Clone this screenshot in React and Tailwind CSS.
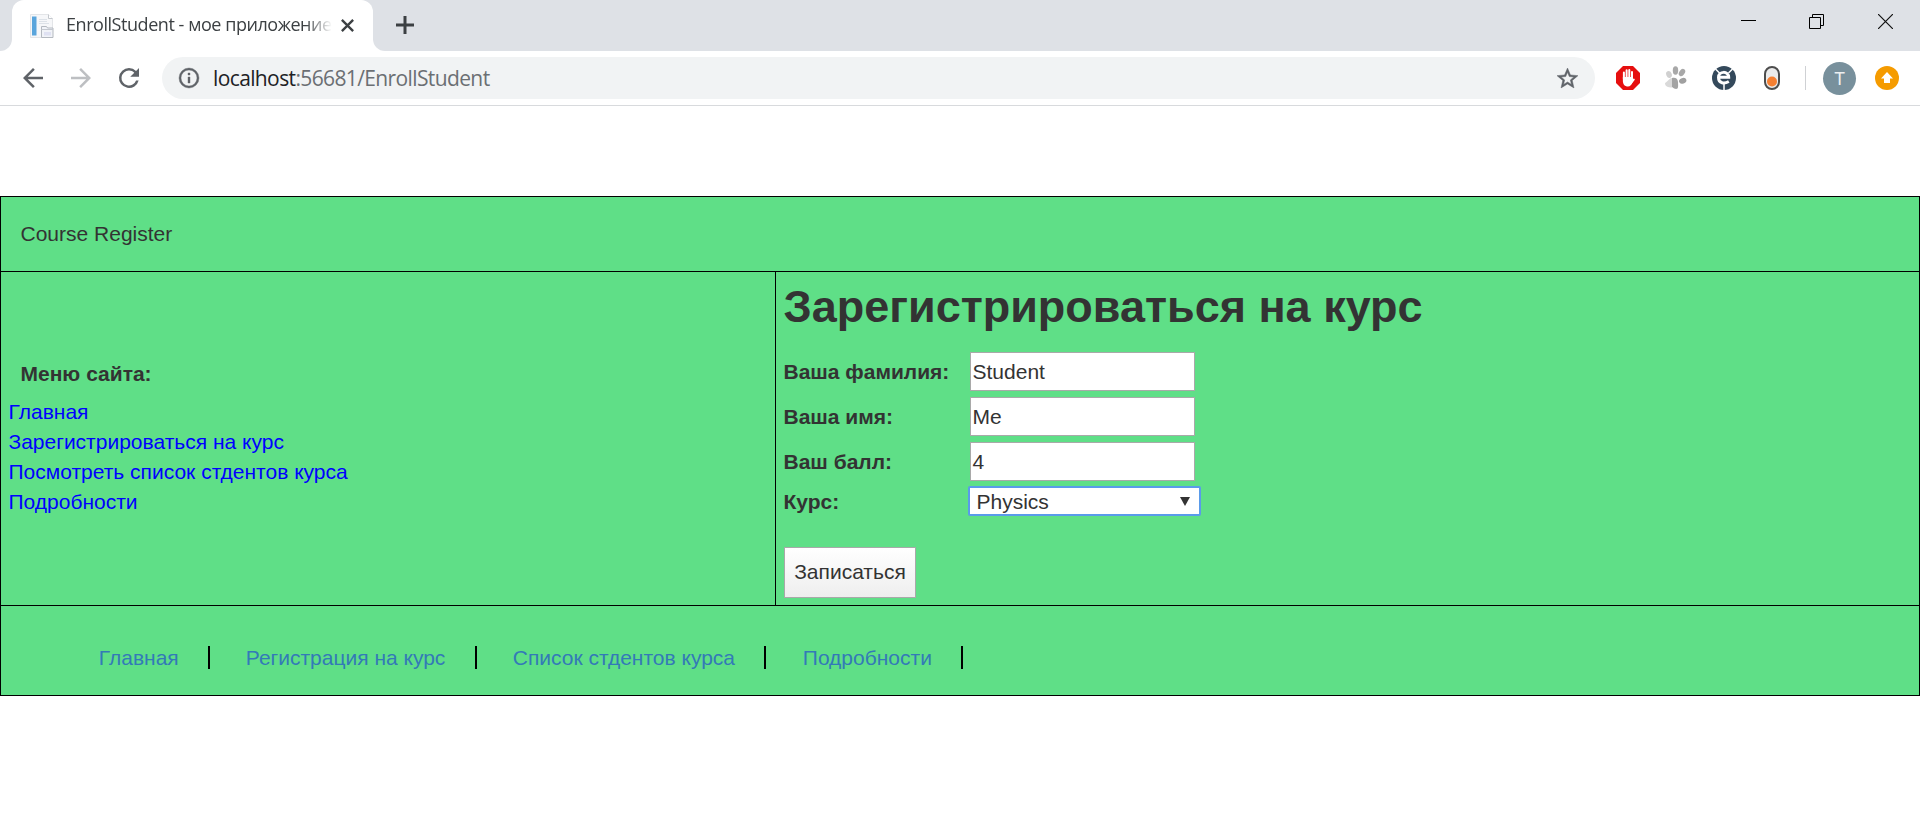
const ARIAL = "font-['Liberation_Sans',sans-serif]";

function Favicon() {
  return (
    <svg className="h-6 w-6 shrink-0" viewBox="0 0 24 24">
      <path d="M.5.5h18l4 4v19H.5z" fill="#f6f7f9" stroke="#e3e5e8" />
      <path d="M2 2.500h4.500v19H2z" fill="#5aa5dc" />
      <path d="M9 5h8v1H9zM9 7h8v1H9zM9 9h10v1H9z" fill="#dde2e8" />
      <path d="M18.500 .5v4h4" fill="#fff" stroke="#c4c8cd" />
      <path d="M11.500 12.500h5l1 1.500h5.500v9.500h-11.500z" fill="#f1f3f8" stroke="#b4b9c0" />
      <path d="M11.500 15.500h11.500" stroke="#c4c8cf" />
      <path d="M14 18h7v3.500h-7z" fill="#dfe1f2" />
    </svg>
  );
}

function TabStrip() {
  return (
    <div className="flex h-[51px] bg-[#dee1e6]">
      <div className="w-3 bg-white">
        <div className="h-full w-3 rounded-br-[12px] bg-[#dee1e6]" />
      </div>
      <div className="flex w-[361px] items-center rounded-t-[12px] bg-white pl-[18px]">
        <Favicon />
        <div className="mb-0.5 ml-3 w-[266px] whitespace-nowrap font-['Open_Sans',sans-serif] text-[18px] tracking-[-0.45px] text-[#3c4043] [mask-image:linear-gradient(to_right,black_90%,transparent_100%)]">
          EnrollStudent - мое приложение
        </div>
        <svg className="ml-[9px] h-[13px] w-[13px] shrink-0" viewBox="0 0 12 12" stroke="#3c4043" strokeWidth="2.200">
          <path d="M.8.8l10.400 10.400M11.200.8L.8 11.200" />
        </svg>
      </div>
      <div className="w-3 bg-white">
        <div className="h-full w-3 rounded-bl-[12px] bg-[#dee1e6]" />
      </div>
      <svg className="ml-[11px] mt-4 h-[18px] w-[18px]" viewBox="0 0 18 18" stroke="#3c4043" strokeWidth="3">
        <path d="M9 0v18M0 9h18" />
      </svg>
      <div className="ml-auto flex pt-[14px]">
        <svg className="h-[15px] w-[15px]" viewBox="0 0 15 15" shapeRendering="crispEdges">
          <path d="M0 6h15v1H0z" fill="#000" />
        </svg>
        <svg className="ml-[53px] h-[15px] w-[15px]" viewBox="0 0 15 15" fill="none" stroke="#000">
          <path d="M.5 3.500h11v11H.5zM3.500 3.500v-3h11v11h-3" />
        </svg>
        <svg className="ml-[54px] mr-[27px] h-[15px] w-[15px]" viewBox="0 0 15 15" stroke="#111" strokeWidth="1.200">
          <path d="M0 0l15 15M15 0L0 15" />
        </svg>
      </div>
    </div>
  );
}

function Toolbar() {
  return (
    <div className="flex h-[55px] items-center border-b border-[#d8dadd] bg-white pl-[18px]">
      <svg className="h-[30px] w-[30px]" viewBox="0 0 24 24" fill="#5f6368">
        <path d="M20 11H7.830l5.590-5.590L12 4l-8 8 8 8 1.410-1.410L7.830 13H20v-2z" />
      </svg>
      <svg className="ml-[18px] h-[30px] w-[30px]" viewBox="0 0 24 24" fill="#bdbfc2">
        <path d="M12 4l-1.410 1.410L16.170 11H4v2h12.170l-5.580 5.590L12 20l8-8z" />
      </svg>
      <svg className="ml-[18px] h-[30px] w-[30px]" viewBox="0 0 24 24" fill="#5f6368">
        <path d="M17.650 6.350A7.958 7.958 0 0 0 12 4a8 8 0 1 0 7.730 10h-2.080A6 6 0 1 1 12 6c1.660 0 3.140.69 4.220 1.780L13 11h7V4l-2.350 2.350z" />
      </svg>
      <div className="ml-[18px] flex h-[42px] w-[1433px] items-center rounded-full bg-[#f1f3f4] pl-[15px] pr-[15px]">
        <svg className="h-6 w-6" viewBox="0 0 24 24" fill="#5f6368" stroke="#5f6368" strokeWidth=".4">
          <path d="M11 7h2v2h-2zm0 4h2v6h-2zm1-9a10 10 0 1 0 0 20 10 10 0 0 0 0-20zm0 18a8 8 0 1 1 0-16 8 8 0 0 1 0 16z" />
        </svg>
        <div className="ml-3 mt-0.5 whitespace-nowrap font-['Open_Sans',sans-serif] text-[21px] tracking-[-0.62px] text-[#6b6f73]">
          <span className="text-[#202124]">localhost</span>:56681/EnrollStudent
        </div>
        <svg className="ml-auto h-[25px] w-[25px]" viewBox="0 0 24 24" fill="#5f6368" stroke="#5f6368" strokeWidth=".5">
          <path d="M22 9.240l-7.190-.62L12 2 9.190 8.630 2 9.240l5.460 4.730L5.820 21 12 17.270 18.180 21l-1.630-7.030L22 9.240zM12 15.400l-3.760 2.270 1-4.280-3.320-2.880 4.380-.38L12 6.100l1.710 4.040 4.380.38-3.320 2.880 1 4.280L12 15.400z" />
        </svg>
      </div>
      <svg className="ml-[21px] h-6 w-6" viewBox="0 0 24 24">
        <path d="M7 0h10l7 7v10l-7 7H7l-7-7V7z" fill="#e60f0f" />
        <path
          d="M7.900 13V6.500M10.600 12V4.300M13.300 12V4M16 13V6M17.800 13.500l-3 4"
          fill="none"
          stroke="#fff"
          strokeWidth="2"
          strokeLinecap="round"
        />
        <path d="M6.900 11h10l-.5 5c-.8 2.800-2.200 4.500-4.400 4.500-3.300 0-5.100-2.200-5.100-5.500z" fill="#fff" />
      </svg>
      <svg className="ml-[25px] h-6 w-6" viewBox="0 0 24 24">
        <ellipse cx="4" cy="8.500" rx="2.700" ry="3.500" transform="rotate(-25 4 8.500)" fill="#d0d0d0" />
        <ellipse cx="10.500" cy="4.500" rx="2.700" ry="4.200" fill="#a8a8a8" />
        <ellipse cx="17" cy="6.500" rx="2.700" ry="4" transform="rotate(35 17 6.500)" fill="#a8a8a8" />
        <ellipse cx="17.700" cy="14.800" rx="3.800" ry="2.800" transform="rotate(-20 17.700 14.800)" fill="#a0a0a0" />
        <path d="M0 17c2.500-1 4-4.500 7-5v9.500C3 21.500 0 20.500 0 17z" fill="#d9d9d9" />
        <path d="M7 12c3-1 6 .5 6 4 0 2 .5 5-.5 6.500-1.500 1.200-3.500 0-5.500-1.500z" fill="#a3a3a3" />
      </svg>
      <svg className="ml-[23px] h-6 w-6" viewBox="0 0 24 24">
        <circle cx="12" cy="12" r="12" fill="#34495b" />
        <path d="M3.500 3l4 4M20.500 3l-4 4M12 18v6" fill="none" stroke="#fff" strokeWidth="1.500" />
        <path
          d="M6.500 11.300h10.200c0-6.600-10.200-6.600-10.200.2 0 6.200 6 6.400 10.300 4"
          fill="none"
          stroke="#fff"
          strokeWidth="3"
        />
      </svg>
      <svg className="ml-7 h-6 w-4" viewBox="0 0 16 24">
        <rect x="1" y="1" width="14" height="22" rx="7" fill="#ebebeb" stroke="#4d4d4d" strokeWidth="2" />
        <circle cx="8" cy="15.500" r="5" fill="#f57f31" />
      </svg>
      <div className="ml-[25px] h-6 w-px bg-[#cfd1d4]" />
      <div className="ml-[17px] flex h-[33px] w-[33px] items-center justify-center rounded-full bg-[#78909c] font-['Roboto',sans-serif] text-[18px] text-[#eceff1]">
        T
      </div>
      <svg className="ml-[19px] h-6 w-6" viewBox="0 0 24 24">
        <circle cx="12" cy="12" r="12" fill="#f59b00" />
        <path d="M12 6l6 6.500h-3V17H9v-4.500H6z" fill="#fff" />
      </svg>
    </div>
  );
}

function TextRow({ label, value }) {
  return (
    <div className="mb-1.5 flex h-[39px] items-center">
      <label className="w-[186.5px] font-bold">{label}</label>
      <div className="flex h-[39px] w-[225px] items-center border border-[#a9a9a9] bg-white pl-[1.5px]">{value}</div>
    </div>
  );
}

function FooterLink({ className, children }) {
  return (
    <div className={"h-[23px] border-r-2 border-black pl-[0.8px] leading-[23px] whitespace-nowrap " + className}>
      <a>{children}</a>
    </div>
  );
}

export default function App() {
  return (
    <div className="h-[832px] w-[1920px] overflow-hidden bg-white">
      <TabStrip />
      <Toolbar />
      <div className={"mt-[90px] h-[500px] border border-black bg-[#5fdf87] text-[21px] leading-[30px] text-[#333] " + ARIAL}>
        <header className="h-[75px] border-b border-black pl-[19.5px] pt-[22px]">Course Register</header>
        <div className="flex h-[334px] border-b border-black">
          <nav className="w-[775px] border-r border-black pl-[7.5px] pt-[87px]">
            <div className="mb-2 pl-3 font-bold">Меню сайта:</div>
            <ul className="text-[#0000ff]">
              <li>Главная</li>
              <li>Зарегистрироваться на курс</li>
              <li>Посмотреть список стдентов курса</li>
              <li>Подробности</li>
            </ul>
          </nav>
          <main className="pl-[7.5px] pt-2.5">
            <h1 className="mb-5 text-[45px] leading-[50px] font-bold whitespace-nowrap">Зарегистрироваться на курс</h1>
            <TextRow label="Ваша фамилия:" value="Student" />
            <TextRow label="Ваша имя:" value="Me" />
            <TextRow label="Ваш балл:" value="4" />
            <div className="-mt-px flex h-[30px]">
              <label className="w-[184.5px] pt-px font-bold">Курс:</label>
              <div className="flex h-[30px] w-[233px] justify-between rounded-[2px] border-2 border-[#5a9bea] bg-white pl-[6.5px] pr-[9px] leading-[28px]">
                Physics
                <svg className="mt-[9px] h-[9px] w-[10px]" viewBox="0 0 10 9">
                  <path d="M0 0h10L5 9z" fill="#333" />
                </svg>
              </div>
            </div>
            <button className="ml-[0.5px] mt-[31px] block h-[51px] w-[132px] border border-[#a9a9a9] bg-gradient-to-b from-white to-[#eeeeee] pb-0.5 text-center">
              Записаться
            </button>
          </main>
        </div>
        <footer className="flex pl-[97px] pt-10 text-[#337ab7]">
          <FooterLink className="w-[112px]">Главная</FooterLink>
          <FooterLink className="ml-[35px] w-[232px]">Регистрация на курс</FooterLink>
          <FooterLink className="ml-[35px] w-[254px]">Список стдентов курса</FooterLink>
          <FooterLink className="ml-9 w-[161px]">Подробности</FooterLink>
        </footer>
      </div>
    </div>
  );
}
